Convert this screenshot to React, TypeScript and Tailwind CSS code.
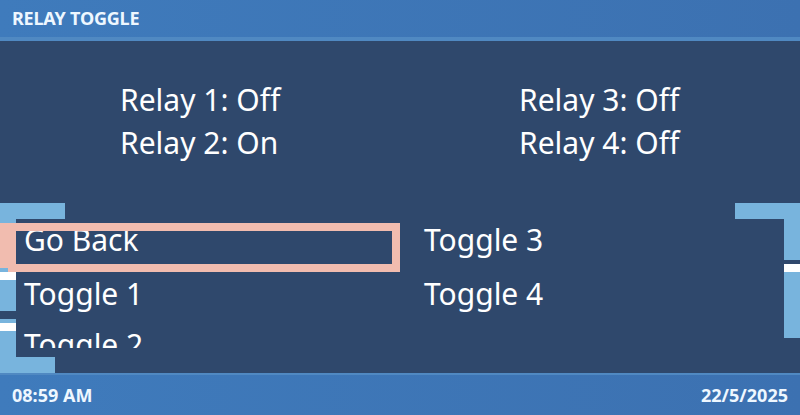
import React from "react";

const font = { fontFamily: '"Noto Sans", "Open Sans", sans-serif' };

export default function App() {
  return (
    <div className="w-[800px] h-[415px] flex flex-col bg-[#2f486c] overflow-hidden text-white" style={font}>
      <div className="h-[41px] shrink-0 bg-gradient-to-r from-[#3f7bbc] to-[#3c71b1] border-b-4 border-[#5089c2] flex items-center px-3">
        <span className="text-[18px] font-bold text-[#eef7ff] tracking-[-0.2px]">RELAY TOGGLE</span>
      </div>
      <div className="flex-1 relative">
        <div className="flex pt-[37px] pl-[120px]">
          <div className="w-[399px] flex flex-col text-[30px] leading-[43px]">
            <span>Relay 1: Off</span>
            <span>Relay 2: On</span>
          </div>
          <div className="flex flex-col text-[30px] leading-[43px]">
            <span>Relay 3: Off</span>
            <span>Relay 4: Off</span>
          </div>
        </div>

        {/* left bracket */}
        <div className="absolute left-0 top-[162px] w-[65px] h-[16px] bg-[#78b4dd]" />
        <div className="absolute left-0 top-[178px] w-[16px] h-[93px] bg-[#78b4dd]" />
        <div className="absolute left-0 top-[231px] w-[16px] h-[8px] bg-white" />
        <div className="absolute left-0 top-[270px] w-[16px] h-[8px] bg-[#2f486c]" />
        <div className="absolute left-0 top-[278px] w-[16px] h-[38px] bg-[#78b4dd]" />
        <div className="absolute left-0 top-[282px] w-[16px] h-[8px] bg-white" />
        <div className="absolute left-0 top-[316px] w-[55px] h-[16px] bg-[#78b4dd]" />

        {/* right bracket */}
        <div className="absolute right-0 top-[162px] w-[65px] h-[16px] bg-[#78b4dd]" />
        <div className="absolute right-0 top-[178px] w-[16px] h-[41px] bg-[#78b4dd]" />
        <div className="absolute right-0 top-[223px] w-[16px] h-[8px] bg-white" />
        <div className="absolute right-0 top-[231px] w-[16px] h-[50px] bg-[#78b4dd]" />
        <div className="absolute right-0 top-[281px] w-[70px] h-[16px] bg-[#78b4dd]" />

        {/* list */}
        <div className="absolute left-[16px] top-[182px] w-[768px] h-[125px] overflow-hidden flex bg-[#2f486c]">
          <div className="w-[384px] flex flex-col pl-[8px] text-[30px] leading-[33px]">
            <span className="h-[54px] shrink-0">Go Back</span>
            <span className="h-[51px] shrink-0">Toggle 1</span>
            <span className="h-[51px] shrink-0">Toggle 2</span>
          </div>
          <div className="flex flex-col pl-[24px] text-[30px] leading-[33px]">
            <span className="h-[54px] shrink-0">Toggle 3</span>
            <span className="h-[51px] shrink-0">Toggle 4</span>
          </div>
        </div>

        {/* selection highlight */}
        <div className="absolute left-0 top-[182px] w-[16px] h-[45px] bg-[#f1bcaf]" />
        <div className="absolute left-[8px] top-[182px] w-[392px] h-[49px] border-8 border-[#f1bcaf]" />
      </div>
      <div className="h-[42px] shrink-0 bg-gradient-to-r from-[#3f7bbc] to-[#3c71b1] border-t-2 border-[#5089c2] flex items-center justify-between px-3">
        <span className="text-[18px] font-bold text-[#eef7ff]">08:59 AM</span>
        <span className="text-[18px] font-bold text-[#eef7ff]">22/5/2025</span>
      </div>
    </div>
  );
}
